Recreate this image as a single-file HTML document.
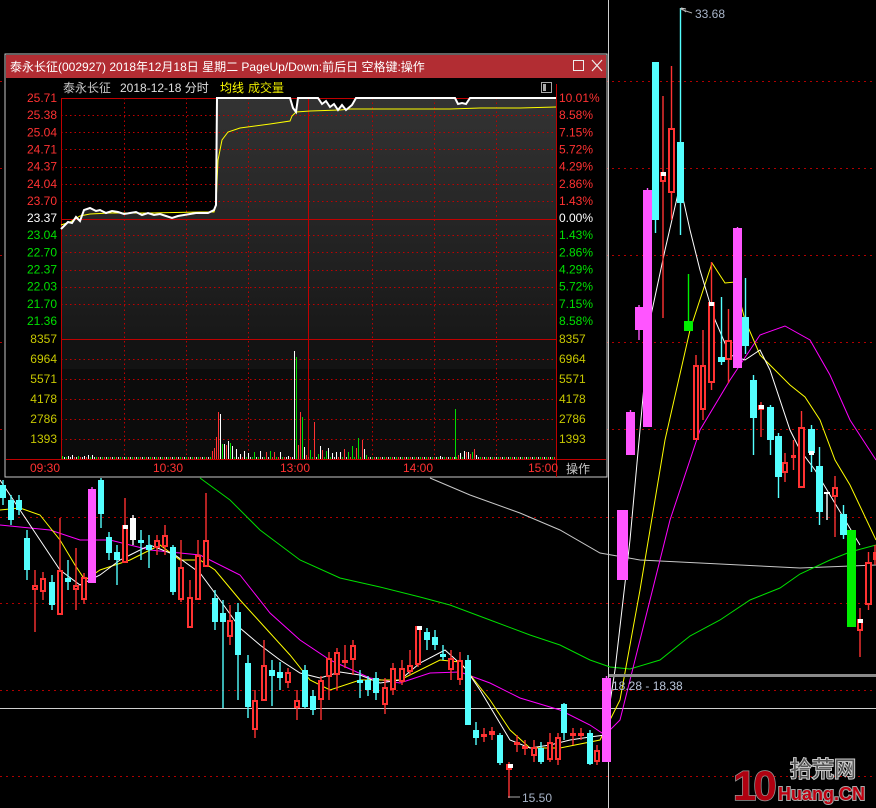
<!DOCTYPE html>
<html><head><meta charset="utf-8"><style>
html,body{margin:0;padding:0;background:#000;width:876px;height:808px;overflow:hidden}
svg{display:block}
text{font-family:"Liberation Sans","Noto Sans CJK SC",sans-serif}
</style></head><body>
<svg id="s" width="876" height="808" viewBox="0 0 876 808" xmlns="http://www.w3.org/2000/svg">
<rect width="876" height="808" fill="#000"/>
<g id="bg"></g>
<g id="popup"></g>
</svg>
<script>
var NS="http://www.w3.org/2000/svg";
function el(p,t,a,txt){var e=document.createElementNS(NS,t);for(var k in a)e.setAttribute(k,a[k]);if(txt!=null)e.textContent=txt;p.appendChild(e);return e;}
var bg=document.getElementById('bg'),pp=document.getElementById('popup');
[81,168,255,342,429,517,603,690,776].forEach(function(y){el(bg,'line',{x1:0,x2:876,y1:y+.5,y2:y+.5,stroke:'#b00000','stroke-dasharray':'2,4','stroke-width':1});});
el(bg,'line',{x1:0,x2:876,y1:708.5,y2:708.5,stroke:'#cfcfcf','stroke-width':1});
el(bg,'line',{x1:608.5,x2:608.5,y1:0,y2:808,stroke:'#cfcfcf','stroke-width':1});
function pl(pts,c){el(bg,'polyline',{points:pts,fill:'none',stroke:c,'stroke-width':1});}
pl("430,478 470,495 520,513 560,530 600,553 640,560 700,563 760,566 800,568 876,565",'#c8c8c8');
pl("200,478 230,500 260,530 300,560 340,578 380,587 420,597 450,605 490,620 530,635 560,645 590,660 610,667 630,669 660,660 690,636 720,620 750,600 780,588 800,574 830,560 850,552 876,545",'#00e000');
pl("0,525 20,527 50,530 80,540 110,540 150,550 200,555 240,575 270,613 300,640 330,660 370,678 400,683 430,673 460,672 490,683 520,698 560,710 590,725 605,735 620,720 640,640 670,520 700,430 730,380 760,335 785,326 810,340 830,375 850,420 876,460",'#ff00ff');
pl("0,510 20,508 40,515 60,540 75,565 85,580 100,570 130,560 160,545 180,560 200,560 215,570 240,600 270,633 290,655 310,680 330,690 360,680 400,680 440,660 460,662 490,700 510,730 530,748 560,748 600,740 620,700 640,590 665,440 690,330 712,263 725,283 735,282 745,320 760,355 790,385 805,397 820,420 835,460 850,485 876,540",'#ffff00');
pl("0,480 20,510 40,540 60,570 80,585 100,575 120,560 130,555 150,545 175,555 200,573 220,600 240,628 260,645 280,660 300,673 320,678 340,672 360,675 380,683 400,680 420,663 445,650 465,668 480,690 495,715 510,740 530,748 550,745 570,740 590,737 605,735 615,670 630,540 650,320 665,250 680,185 690,230 700,270 715,320 730,355 745,360 760,350 770,370 790,430 800,450 815,470 830,495 845,520 860,545",'#ffffff');
var C=[
[0,485,498,480,505,'c'],[8,500,520,495,525,'c'],[16,500,510,495,515,'c'],[24,538,570,530,580,'c'],[32,585,590,570,632,'r'],[40,578,592,572,600,'r'],
[49,582,605,575,610,'c'],[57,570,615,518,615,'r'],[65,578,582,560,590,'c'],[73,585,590,548,610,'r'],[81,577,600,573,604,'r'],[88,489,583,487,583,'m',8],
[98,480,514,478,528,'c'],[106,537,553,532,560,'c'],[114,552,560,545,585,'c'],[122,525,563,498,563,'r'],[130,518,540,515,545,'w'],[138,540,543,530,560,'c'],
[146,545,550,535,568,'c'],[154,540,548,535,555,'r'],[162,535,547,525,555,'r'],[170,547,592,545,595,'c'],[178,567,600,540,602,'r'],[187,597,628,580,628,'r'],
[195,555,600,540,600,'r'],[203,540,567,493,567,'r'],[212,598,622,590,630,'c'],[220,613,622,600,708,'c'],[227,620,637,605,645,'r'],[235,612,655,603,700,'c'],
[245,663,707,655,718,'c'],[252,700,730,690,738,'r'],[261,665,701,640,701,'r'],[269,670,676,660,706,'c'],[277,672,678,662,690,'c'],[285,672,683,668,688,'r'],
[294,700,708,690,720,'r'],[302,670,707,665,708,'c'],[310,696,710,690,715,'c'],[318,680,700,676,720,'r'],[326,658,677,652,700,'r'],[334,652,675,648,690,'r'],
[342,660,662,645,668,'r'],[350,645,660,640,675,'r'],[357,680,683,670,698,'c'],[365,680,690,676,696,'c'],[373,678,693,672,700,'c'],[382,687,705,678,714,'r'],
[390,668,690,663,695,'r'],[399,668,682,660,685,'r'],[407,665,672,650,675,'r'],[415,626,665,626,667,'r'],[424,632,640,628,650,'c'],[432,637,645,630,650,'c'],
[440,654,657,645,660,'c'],[448,658,670,650,680,'r'],[457,660,680,652,685,'r'],[465,660,725,655,725,'c'],[473,730,738,722,745,'c'],[481,734,737,728,742,'r'],
[489,731,735,727,740,'r'],[497,735,763,733,765,'c'],[506,764,770,762,798,'r'],[514,742,744,735,752,'r'],[522,746,748,740,755,'r'],[531,747,756,740,762,'r'],
[538,748,762,742,764,'c'],[547,742,760,733,762,'r'],[555,737,760,733,765,'r'],[561,704,733,703,740,'c'],[570,733,735,728,745,'r'],[578,733,735,728,740,'r'],
[587,733,764,730,765,'c'],[594,750,762,745,765,'r'],[602,678,762,676,762,'m',9],
[617,510,580,510,580,'m',11],[626,412,455,410,455,'m',9],[635,307,330,305,340,'m',8],[643,190,427,188,427,'m',9],[652,62,220,62,233,'c',7],[660,172,182,96,318,'r',6],[668,128,193,66,220,'r',7],
[677,142,203,8,235,'c',7],[684,321,331,274,331,'g',9],[693,365,440,355,440,'r',6],[700,365,410,330,420,'r',6],[708,302,383,262,390,'r',7],[718,357,362,297,365,'c',7],
[725,340,360,309,383,'r',7],[733,228,368,227,368,'m',9],[742,317,346,278,354,'c',7],[750,380,418,375,455,'c',7],[758,405,410,402,437,'r',6],[767,407,440,405,455,'c',7],
[775,436,477,433,498,'c',7],[782,462,473,453,482,'r',6],[791,455,457,440,470,'r',5],[798,427,488,411,488,'r',7],[808,429,453,425,472,'c',7],[816,466,512,447,525,'c',7],
[824,492,494,492,520,'w',6],[832,487,497,476,537,'r',6],[840,514,535,505,539,'c',7],[847,530,627,530,627,'g',9],[857,619,631,608,657,'r',6],[865,562,605,552,610,'r',7],[873,552,560,545,565,'r',4]
];
var col={c:'#54ffff',r:'#ff3232',m:'#ff55ff',g:'#00ee00',w:'#ffffff'};
C.forEach(function(d){var x=d[0],w=d[6]||6,c=col[d[5]],cx=x+w/2;
 el(bg,'line',{x1:cx,x2:cx,y1:d[3],y2:d[4],stroke:c,'stroke-width':1.4});
 if(d[5]=='r'){el(bg,'rect',{x:x+1,y:d[1]+1,width:w-2,height:Math.max(d[2]-d[1]-2,1),fill:'#000',stroke:c,'stroke-width':2});}
 else{el(bg,'rect',{x:x,y:d[1],width:w,height:Math.max(d[2]-d[1],2),fill:c});}
});
[[123,525],[661,172],[709,302],[759,405],[809,451],[858,619],[417,626],[508,764]].forEach(function(p){el(bg,'rect',{x:p[0],y:p[1],width:5,height:4,fill:'#fff'});});
el(bg,'polyline',{points:"686,12 681,8 686,9",fill:'none',stroke:'#ccc'});
el(bg,'line',{x1:680,x2:692,y1:9,y2:13,stroke:'#aaa'});
el(bg,'text',{x:695,y:18,fill:'#a8b4c8','font-size':12},'33.68');
el(bg,'line',{x1:508,x2:520,y1:797,y2:797,stroke:'#aaa'});
el(bg,'text',{x:522,y:802,fill:'#a8b4c8','font-size':12},'15.50');
el(bg,'rect',{x:609,y:674,width:267,height:3,fill:'#8a8a8a'});
el(bg,'text',{x:612,y:690,fill:'#b8c4d8','font-size':12},'18.28 - 18.38');
el(bg,'text',{x:733,y:800,fill:'#b00010',stroke:'#999','stroke-width':1.5,'font-size':42,'font-weight':'bold','paint-order':'stroke','letter-spacing':'-3'},'10');
el(bg,'text',{x:790,y:777,fill:'#555',stroke:'#ccc','stroke-width':2,'paint-order':'stroke','font-size':22,'font-family':'"Noto Sans CJK SC",sans-serif'},'拾荒网');
el(bg,'text',{x:778,y:800,fill:'#c00010',stroke:'#aaa','stroke-width':2,'paint-order':'stroke','font-size':18,'font-weight':'bold'},'Huang.CN');

el(pp,'rect',{x:5,y:54,width:602,height:423,fill:'#000',stroke:'#c8c8c8','stroke-width':1});
el(pp,'rect',{x:6,y:55,width:600,height:23,fill:'#b22d33'});
el(pp,'text',{x:10,y:71,fill:'#fff','font-size':12},'泰永长征(002927) 2018年12月18日 星期二 PageUp/Down:前后日 空格键:操作');
el(pp,'rect',{x:573.5,y:60.5,width:10,height:10,fill:'none',stroke:'#eee'});
el(pp,'path',{d:'M592,60 L602,71 M602,60 L592,71',stroke:'#eee','stroke-width':1.2});
el(pp,'text',{x:63,y:92,fill:'#c8c8c8','font-size':12},'泰永长征');
el(pp,'text',{x:120,y:92,fill:'#e0e0e0','font-size':12},'2018-12-18 分时');
el(pp,'text',{x:220,y:92,fill:'#ffff00','font-size':12},'均线');
el(pp,'text',{x:248,y:92,fill:'#e6e600','font-size':12},'成交量');
el(pp,'rect',{x:541.5,y:82.5,width:10,height:10,fill:'none',stroke:'#aaa'});
el(pp,'rect',{x:543,y:84,width:3,height:7,fill:'#aaa'});
var defs=el(pp,'defs',{});var lg=el(defs,'linearGradient',{id:'g1',x1:0,y1:0,x2:0,y2:1});
el(lg,'stop',{offset:0,'stop-color':'#333'});el(lg,'stop',{offset:1,'stop-color':'#181818'});
el(pp,'rect',{x:61,y:98,width:495,height:241,fill:'#161616'});
el(pp,'rect',{x:61,y:339,width:495,height:120,fill:'#0c0c0c'});
el(pp,'rect',{x:61,y:339,width:495,height:30,fill:'#131313'});
var price="61,229 64,226 68,222 72,223 76,217 80,221 84,210 90,208 96,211 100,210 106,213 112,211 118,212 124,214 130,213 136,212 142,215 148,213 154,215 160,214 166,216 172,218 178,216 184,215 190,214 196,213 202,213 208,213 214,210 216,205 217,98 290,98 293,108 296,112 298,98 318,98 322,104 326,101 330,107 334,104 338,110 342,105 346,110 352,105 356,98 455,98 458,104 462,103 466,104 470,98 556,98";
el(pp,'polygon',{points:price+" 556,339 61,339",fill:'url(#g1)'});
el(pp,'polygon',{points:"61,98 61,229 "+price.replace("61,229 ","")+" 217,98",fill:'#000'});
for(var i=1;i<13;i++){var y=98+i*17.15;if(i==7)continue;el(pp,'line',{x1:61,x2:556,y1:Math.round(y)+.5,y2:Math.round(y)+.5,stroke:'#c00000','stroke-dasharray':'1.5,3'});}
[359,379,399,419,439].forEach(function(y){el(pp,'line',{x1:61,x2:556,y1:y+.5,y2:y+.5,stroke:'#c00000','stroke-dasharray':'1.5,3'});});
[124,186,248,372,434,496].forEach(function(x){el(pp,'line',{x1:x+.5,x2:x+.5,y1:98,y2:459,stroke:'#c00000','stroke-dasharray':'1.5,3'});});
el(pp,'line',{x1:308.5,x2:308.5,y1:98,y2:459,stroke:'#c00000'});
el(pp,'line',{x1:61,x2:556,y1:219.5,y2:219.5,stroke:'#c00000'});
el(pp,'line',{x1:61,x2:556,y1:339.5,y2:339.5,stroke:'#c00000'});
el(pp,'line',{x1:61,x2:556,y1:98.5,y2:98.5,stroke:'#c00000'});
el(pp,'line',{x1:6,x2:606,y1:459.5,y2:459.5,stroke:'#c00000'});
el(pp,'line',{x1:61.5,x2:61.5,y1:98,y2:459,stroke:'#c00000'});
el(pp,'line',{x1:556.5,x2:556.5,y1:84,y2:477,stroke:'#c00000'});
var vol=[[62,456],[64,457],[68,456],[72,455],[78,456],[84,456],[88,455],[92,455],[212,451],[214,448],[216,437],[218,412],[220,414],[222,444],[224,444],[226,445],[228,441],[230,443],[232,446],[236,449],[240,454],[244,451],[248,453],[254,452],[260,451],[266,452],[270,451],[274,452],[280,452],[288,456],[294,351],[296,357],[298,445],[300,412],[302,417],[304,447],[306,455],[310,450],[314,422],[318,454],[320,446],[322,450],[326,451],[328,448],[332,453],[336,452],[340,452],[344,449],[348,452],[352,446],[356,448],[358,438],[362,440],[364,449],[366,455],[440,456],[455,409],[458,455],[460,453],[464,451],[466,452],[468,452],[470,454],[472,452],[474,449],[476,455]];
var vc={};vc[216]='#ff3232';vc[294]='#fff';vc[296]='#00dd00';vc[300]='#ff3232';vc[342]='#00dd00';vc[344]='#ff3232';vc[346]='#ff3232';vc[348]='#00dd00';vc[455]='#00dd00';vc[470]='#ff3232';vc[472]='#00dd00';vc[474]='#ff3232';vc[352]='#00dd00';vc[356]='#ff3232';vc[212]='#ff3232';vc[214]='#ff3232';
for(var x=62;x<556;x+=2){el(pp,'line',{x1:x+.5,x2:x+.5,y1:457,y2:459,stroke:(x%6==0?'#00dd00':(x%6==2?'#ff3232':'#ddd'))});}
vol.forEach(function(v){el(pp,'line',{x1:v[0]+.5,x2:v[0]+.5,y1:v[1],y2:459,stroke:vc[v[0]]||(v[0]%8==2?'#ff3232':(v[0]%8==6?'#00dd00':'#fff'))});});
el(pp,'polyline',{points:"61,225 70,222 80,216 90,214 110,213 150,213 200,212 214,212 216,205 218,160 222,140 228,132 240,128 270,124 290,121 292,116 296,112 310,111 340,110 350,109 400,109 450,109 480,108 520,108 556,107",fill:'none',stroke:'#ffff00','stroke-width':1});
el(pp,'polyline',{points:price,fill:'none',stroke:'#fff','stroke-width':2});
var L=[['25.71','#ff3232','10.01%','#ff3232'],['25.38','#ff3232','8.58%','#ff3232'],['25.04','#ff3232','7.15%','#ff3232'],['24.71','#ff3232','5.72%','#ff3232'],['24.37','#ff3232','4.29%','#ff3232'],['24.04','#ff3232','2.86%','#ff3232'],['23.70','#ff3232','1.43%','#ff3232'],['23.37','#fff','0.00%','#fff'],['23.04','#00e000','1.43%','#00e000'],['22.70','#00e000','2.86%','#00e000'],['22.37','#00e000','4.29%','#00e000'],['22.03','#00e000','5.72%','#00e000'],['21.70','#00e000','7.15%','#00e000'],['21.36','#00e000','8.58%','#00e000']];
L.forEach(function(l,i){var y=98+i*17.15+4;el(pp,'text',{x:57,y:y,fill:l[1],'font-size':12,'text-anchor':'end'},l[0]);el(pp,'text',{x:559,y:y,fill:l[3],'font-size':12},l[2]);});
['8357','6964','5571','4178','2786','1393'].forEach(function(t,i){var y=343+i*20;el(pp,'text',{x:57,y:y,fill:'#c8c800','font-size':12,'text-anchor':'end'},t);el(pp,'text',{x:559,y:y,fill:'#c8c800','font-size':12},t);});
[['09:30',30],['10:30',153],['13:00',280],['14:00',403],['15:00',528]].forEach(function(t){el(pp,'text',{x:t[1],y:472,fill:'#ff3232','font-size':12},t[0]);});
el(pp,'text',{x:566,y:473,fill:'#c8c8c8','font-size':12},'操作');
</script>
</body></html>
